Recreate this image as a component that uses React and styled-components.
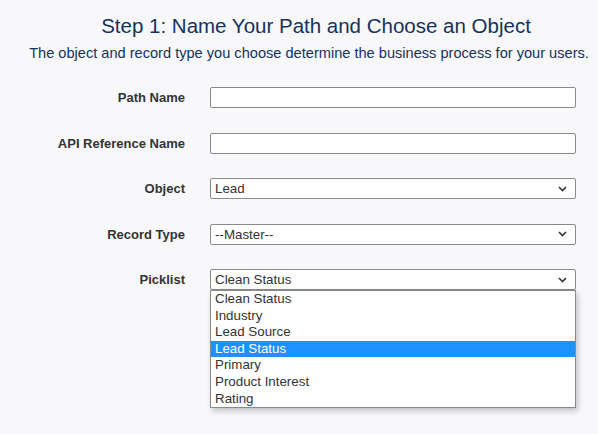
import React from "react";
import styled, { createGlobalStyle } from "styled-components";

const Global = createGlobalStyle`
  html, body { margin: 0; padding: 0; }
  body {
    background: #f8f8fa;
    font-family: "Liberation Sans", Arial, sans-serif;
    width: 598px;
    height: 434px;
    overflow: hidden;
  }
`;

const Page = styled.div`
  display: flex;
  flex-direction: column;
  padding-top: 14px;
`;

const Title = styled.h1`
  margin: 0;
  font-size: 20.5px;
  line-height: 24px;
  font-weight: 400;
  color: #16325c;
  text-align: center;
  padding-left: 34px;
`;

const Subtitle = styled.p`
  margin: 4px 0 0;
  font-size: 14.6px;
  line-height: 22px;
  color: #16325c;
  text-align: center;
  padding-left: 20px;
`;

const Form = styled.div`
  display: flex;
  flex-direction: column;
  gap: 24.5px;
  margin-top: 23px;
`;

const Row = styled.div`
  display: flex;
  align-items: center;
  gap: 25px;
  position: relative;
`;

const Label = styled.label`
  width: 185px;
  text-align: right;
  font-size: 13px;
  font-weight: 700;
  color: #333;
`;

const Field = styled.div`
  position: relative;
  width: 366px;
`;

const TextInput = styled.input`
  box-sizing: border-box;
  width: 366px;
  height: 21px;
  border: 1px solid #8a8a8a;
  border-radius: 2px;
  background: #fff;
  margin: 0;
  padding: 0 4px;
  font-family: inherit;
`;

const Select = styled.div`
  box-sizing: border-box;
  width: 366px;
  height: 21px;
  border: 1px solid #8a8a8a;
  border-radius: 2px;
  background: #fff;
  display: flex;
  align-items: center;
  justify-content: space-between;
  padding: 0 8px 0 4px;
  font-size: 13.33px;
  color: #333;
`;

const Chevron = () => (
  <svg width="9" height="6" viewBox="0 0 9 6">
    <path d="M1 1 L4.5 4.5 L8 1" fill="none" stroke="#333" strokeWidth="1.6" />
  </svg>
);

const List = styled.ul`
  position: absolute;
  top: 21px;
  left: 0;
  box-sizing: border-box;
  width: 366px;
  margin: 0;
  padding: 0;
  list-style: none;
  background: #fff;
  border: 1px solid #8a8a8a;
  box-shadow: 2px 3px 6px rgba(0, 0, 0, 0.22);
  z-index: 2;
`;

const Option = styled.li`
  height: 16.6px;
  line-height: 16.6px;
  padding-left: 4px;
  font-size: 13.33px;
  color: ${(p) => (p.$active ? "#fff" : "#333")};
  background: ${(p) => (p.$active ? "#1e90ff" : "transparent")};
`;

const options = [
  "Clean Status",
  "Industry",
  "Lead Source",
  "Lead Status",
  "Primary",
  "Product Interest",
  "Rating",
];

export default function App() {
  return (
    <Page>
      <Global />
      <Title>Step 1: Name Your Path and Choose an Object</Title>
      <Subtitle>
        The object and record type you choose determine the business process for your users.
      </Subtitle>
      <Form>
        <Row>
          <Label>Path Name</Label>
          <Field>
            <TextInput type="text" />
          </Field>
        </Row>
        <Row>
          <Label>API Reference Name</Label>
          <Field>
            <TextInput type="text" />
          </Field>
        </Row>
        <Row>
          <Label>Object</Label>
          <Field>
            <Select>
              <span>Lead</span>
              <Chevron />
            </Select>
          </Field>
        </Row>
        <Row>
          <Label>Record Type</Label>
          <Field>
            <Select>
              <span>--Master--</span>
              <Chevron />
            </Select>
          </Field>
        </Row>
        <Row>
          <Label>Picklist</Label>
          <Field>
            <Select>
              <span>Clean Status</span>
              <Chevron />
            </Select>
            <List>
              {options.map((o) => (
                <Option key={o} $active={o === "Lead Status"}>
                  {o}
                </Option>
              ))}
            </List>
          </Field>
        </Row>
      </Form>
    </Page>
  );
}
